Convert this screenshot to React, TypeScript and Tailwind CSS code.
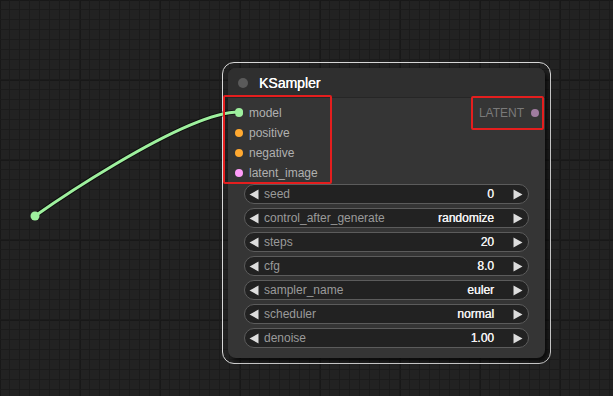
import React from "react";

const inputs = [
  { name: "model", color: "bg-[#9ef09e]" },
  { name: "positive", color: "bg-[#ffa931]" },
  { name: "negative", color: "bg-[#ffa931]" },
  { name: "latent_image", color: "bg-[#ff9cf9]" },
];

const widgets = [
  { label: "seed", value: "0" },
  { label: "control_after_generate", value: "randomize" },
  { label: "steps", value: "20" },
  { label: "cfg", value: "8.0" },
  { label: "sampler_name", value: "euler" },
  { label: "scheduler", value: "normal" },
  { label: "denoise", value: "1.00" },
];

function Tri({ dir }: { dir: "l" | "r" }) {
  return (
    <svg width="10" height="11" viewBox="0 0 10 11" className="shrink-0">
      {dir === "l" ? (
        <polygon points="9.5,0.5 9.5,10.5 0.5,5.5" fill="#dddddd" />
      ) : (
        <polygon points="0.5,0.5 0.5,10.5 9.5,5.5" fill="#dddddd" />
      )}
    </svg>
  );
}

export default function App() {
  return (
    <div
      className="relative w-[613px] h-[396px] overflow-hidden bg-[#222222] bg-[image:linear-gradient(to_right,#1b1b1b_1px,transparent_1px),linear-gradient(to_bottom,#1b1b1b_1px,transparent_1px),linear-gradient(to_right,#181818_2px,transparent_2px),linear-gradient(to_bottom,#181818_2px,transparent_2px)] bg-[size:10px_10px,10px_10px,80px_80px,80px_80px] bg-[position:9px_9px,9px_9px,79px_79px,79px_79px]"
      style={{ fontFamily: '"Liberation Sans", Arial, sans-serif' }}
    >
      {/* selection outline */}
      <div className="absolute left-[222px] top-[62px] w-[329px] h-[302px] rounded-[12px] border-[1.5px] border-[#d8d8d8]" />

      {/* node */}
      <div className="absolute left-[228px] top-[68px] w-[317px] h-[290px] rounded-[8px] bg-[#353535] shadow-[3px_3px_4px_rgba(0,0,0,0.7)] flex flex-col overflow-hidden">
        <div className="h-[30px] shrink-0 bg-[#2f2f2f] border-b border-[#262626] flex items-center pl-[10px] gap-[11px]">
          <div className="w-[10px] h-[10px] rounded-full bg-[#5a5a5a]" />
          <span className="text-[14px] text-white leading-none [text-shadow:0.2px_0_0_#fff]">KSampler</span>
        </div>
        <div className="relative flex pt-[5px]">
          <div className="flex flex-col">
            {inputs.map((i) => (
              <div key={i.name} className="h-[20px] flex items-center pl-[7px] gap-[6px]">
                <div className={`w-[8px] h-[8px] rounded-full ${i.color}`} />
                <span className="text-[12px] text-[#b0b0b0] leading-none">{i.name}</span>
              </div>
            ))}
          </div>
          <div className="ml-auto h-[20px] flex items-center pr-[6px] gap-[7px]">
            <span className="text-[12px] text-[#7a7a7a] leading-none">LATENT</span>
            <div className="w-[8px] h-[8px] rounded-full bg-[#a07ca0]" />
          </div>
        </div>
        <div className="flex flex-col gap-[4px] px-[16px] pt-[1px]">
          {widgets.map((w) => (
            <div
              key={w.label}
              className="h-[20px] rounded-full bg-[#222222] border border-[#5c5c5c] flex items-center pl-[4px] pr-[5px]"
            >
              <Tri dir="l" />
              <span className="ml-[5px] text-[12px] text-[#9a9a9a] leading-none">{w.label}</span>
              <span className="ml-auto text-[12px] text-[#f2f2f2] leading-none [text-shadow:0.3px_0_0_#f2f2f2]">{w.value}</span>
              <span className="ml-[19px]">
                <Tri dir="r" />
              </span>
            </div>
          ))}
        </div>
      </div>

      {/* wire */}
      <svg className="absolute left-0 top-0" width="613" height="396" viewBox="0 0 613 396">
        <path d="M35 216 C35 216 182 112 239 112" fill="none" stroke="#000" strokeOpacity="0.55" strokeWidth="5" />
        <path d="M35 216 C35 216 182 112 239 112" fill="none" stroke="#9ef09e" strokeWidth="3" />
        <circle cx="35" cy="216" r="4.5" fill="#9ef09e" />
        <circle cx="239" cy="112" r="4" fill="#9ef09e" />
      </svg>

      {/* red highlight boxes */}
      <div className="absolute left-[223px] top-[95px] w-[109px] h-[89px] border-[2.5px] border-[#e41e1e] rounded-[2px]" />
      <div className="absolute left-[471px] top-[96px] w-[73px] h-[34px] border-[2.5px] border-[#e41e1e] rounded-[2px]" />
    </div>
  );
}
